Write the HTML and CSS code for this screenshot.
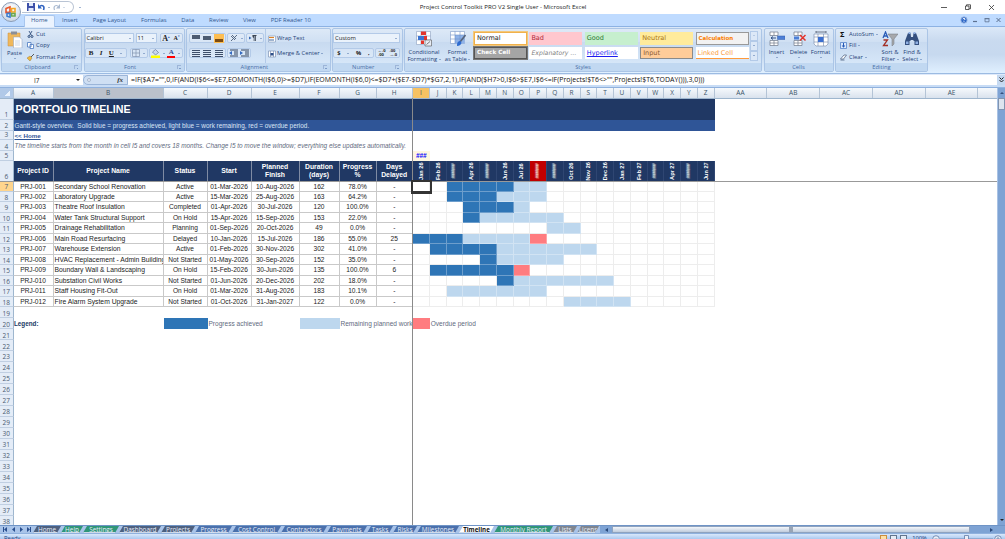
FILE: index.html
```html
<!DOCTYPE html>
<html lang="en">
<head>
    <meta charset="UTF-8">
    <meta name="viewport" content="width=device-width, initial-scale=1.0">
    <title>Project Control Toolkit PRO V2 Single User - Microsoft Excel</title>
    <link rel="stylesheet" href="styles.css">
</head>
<body>
    <!-- Title bar -->
    <header class="titlebar">
        <div class="quick-access">
            <svg width="8" height="8" viewBox="0 0 8 8"><path fill="#3c4fa8" d="M0 0h8v8H0z"/><path fill="#dfe8fa" d="M2 0h4v3H2zM1.500 5h5v3h-5z"/></svg>
            <svg width="7" height="7" viewBox="0 0 7 7"><path d="M1 3c3-3 6-1 4.500 3" fill="none" stroke="#2f62c0" stroke-width="1.600"/><path fill="#2f62c0" d="M0 0v4.500h4z"/></svg>
            <i class="caret"></i>
            <svg width="7" height="7" viewBox="0 0 7 7"><path d="M6 3c-3-3-6-1-4.500 3" fill="none" stroke="#a9b9d0" stroke-width="1.200"/><path fill="#a9b9d0" d="M7 0v4.500H3z"/></svg>
            <i class="caret pale"></i>
        </div>
        <i class="caret qa-more"></i>
        <span class="window-title">Project Control Toolkit PRO V2 Single User - Microsoft Excel</span>
        <svg class="window-buttons" width="54" height="8" viewBox="0 0 54 8" fill="none" stroke="#333" stroke-width=".8"><path d="M0 4.500h6M24.500 3h3.500v3.500h-3.500zM25.500 3V1.800h4v4H28M48 2l5 5M53 2l-5 5"/></svg>
    </header>
    <div class="office-button">
        <svg width="14" height="14" viewBox="0 0 14 14" fill="none" stroke-width="1.600"><path stroke="#e8562a" d="M2 3.500l4-1.500v5l-4 .5z"/><path stroke="#f5a623" d="M7.500 3.500h3.500v3.500H7.500z"/><path stroke="#6aa84f" d="M7.500 8.500H11V11H7.500z"/><path stroke="#3f7fd0" d="M3 8.500l3-.3v4l-3-1z"/></svg>
    </div>

    <!-- Ribbon tabs -->
    <nav class="tabs">
        <span class="tab active">Home</span>
        <span class="tab">Insert</span>
        <span class="tab">Page Layout</span>
        <span class="tab">Formulas</span>
        <span class="tab">Data</span>
        <span class="tab">Review</span>
        <span class="tab">View</span>
        <span class="tab">PDF Reader 10</span>
        <svg class="book-buttons" width="42" height="8" viewBox="0 0 42 8" fill="none" stroke="#5d7190"><circle cx="4" cy="4" r="3.200" fill="#2e68c8" stroke="#a7bfe2" stroke-width=".8"/><path stroke="#fff" stroke-width=".9" d="M2.800 3q1.200-1.500 2.400 0L4 4.300M4 5.200v.8"/><path stroke-width="1.200" d="M13 5.500h4"/><path d="M25 2.800h4v3h-4zM24.500 2.500h5" stroke-width=".8"/><path d="M36.500 2l4 4M40.500 2l-4 4"/></svg>
    </nav>

    <!-- Ribbon -->
    <div class="ribbon">
        <section class="group clipboard">
            <div class="tools">
                <div class="big paste">
                    <svg width="16" height="17" viewBox="0 0 16 17"><path fill="#efb85c" stroke="#c98d3e" stroke-width=".5" d="M1 2h12v13H1z"/><path fill="#8b8f98" d="M4 .5h6v3H4z"/><path fill="#fff" stroke="#8c9ebb" stroke-width=".5" d="M6.500 6h6l2.500 2.500V17H6.500z"/><path stroke="#9bb2d6" stroke-width=".5" d="M8 10h5M8 12h5M8 14h5"/></svg>
                    <span>Paste</span><i class="caret"></i>
                </div>
                <div class="stack">
                    <span class="small"><svg width="7" height="7" viewBox="0 0 7 7" fill="none" stroke="#34527f"><path d="M2 0l2.500 4.500M5 0L2.500 4.500" stroke-width=".9"/><circle cx="2" cy="5.500" r="1"/><circle cx="5" cy="5.500" r="1"/></svg>Cut</span>
                    <span class="small"><svg width="7" height="7" viewBox="0 0 7 7" fill="#fff" stroke="#4a78c0" stroke-width=".8"><path d="M.5.5h3.500v4.500H.5zM3 2.500h3.500v4H3z"/></svg>Copy</span>
                    <span class="small"><svg width="7" height="7" viewBox="0 0 7 7"><path fill="#f0b93f" stroke="#8b6728" stroke-width=".4" d="M0 4l3-2 2 2-2 3z"/><path stroke="#555" d="M4 3L7 0"/></svg>Format Painter</span>
                </div>
            </div>
            <div class="group-name">Clipboard<i class="launcher"></i></div>
        </section>

        <section class="group font">
            <div class="tools column">
                <div class="line">
                    <span class="combo font-name">Calibri<i class="caret"></i></span>
                    <span class="combo font-size">11<i class="caret"></i></span>
                    <span class="buttons grow"><b class="serif big-a">A<sup>▴</sup></b><b class="serif small-a">A<sup>▾</sup></b></span>
                </div>
                <div class="line">
                    <span class="buttons biu"><b class="serif">B</b><b class="serif italic">I</b><b class="serif under">U</b><i class="caret"></i></span>
                    <span class="buttons border-btn"><svg width="8" height="8" viewBox="0 0 8 8" fill="none" stroke="#8194b0" stroke-width=".7"><path d="M.5.5h7v7h-7zM4 0v8M0 4h8"/></svg><i class="caret"></i></span>
                    <span class="buttons colors"><svg width="9" height="9" viewBox="0 0 9 9"><path fill="#c9d8ee" stroke="#50658a" stroke-width=".6" d="M1.500 3l3-2.500 3 3L4.500 6z"/><path fill="#ff0" d="M0 6.500h9V9H0z"/></svg><i class="caret"></i><span class="font-color">A</span><i class="caret"></i></span>
                </div>
            </div>
            <div class="group-name">Font<i class="launcher"></i></div>
        </section>

        <section class="group alignment">
            <div class="tools">
                <div class="column align-left">
                    <div class="line">
                        <span class="buttons three"><i class="bars top"></i><i class="bars mid"></i><i class="bars bottom on"></i></span>
                        <span class="buttons pair"><svg width="8" height="8" viewBox="0 0 8 8" fill="none" stroke="#4b5d78"><path d="M1 7l6-6M1 2l4 4M2 1l4 4" stroke-width=".9"/></svg><i class="caret"></i></span>
                        <span class="buttons pair"><svg width="8" height="8" viewBox="0 0 8 8"><path fill="#3768b3" d="M0 2.500L2.500 4 0 5.500z"/><path fill="#3b4554" d="M3.500 1h4v1h-.6v5h-.8V2h-.6v5h-.8V4Q3 3.500 3.500 1z"/></svg><i class="caret"></i></span>
                    </div>
                    <div class="line">
                        <span class="buttons three"><i class="lines"></i><i class="lines center"></i><i class="lines right"></i></span>
                        <span class="buttons pair indent"><svg width="9" height="8" viewBox="0 0 9 8"><path d="M1 1h8M5 3h4M5 5h4M1 7h8" stroke="#33445f"/><path fill="#356bc0" d="M0 4l3-2v4z"/></svg><svg width="9" height="8" viewBox="0 0 9 8"><path d="M1 1h8M5 3h4M5 5h4M1 7h8" stroke="#33445f"/><path fill="#356bc0" d="M3 4L0 2v4z"/></svg></span>
                    </div>
                </div>
                <div class="column wrap-merge">
                    <span class="small"><svg width="8" height="8" viewBox="0 0 8 8"><path fill="#fff" stroke="#7b93b8" stroke-width=".6" d="M.5 1h7v6h-7z"/><path stroke="#d9822b" stroke-width="1.200" d="M1 2.500h5"/><path stroke="#41689f" d="M1 5h5"/></svg>Wrap Text</span>
                    <span class="small"><svg width="8" height="8" viewBox="0 0 8 8"><path fill="#fff" stroke="#6d85ab" stroke-width=".6" d="M.5 1h7v6h-7zM2.500 1v6M5.500 1v6"/><path fill="#2e4f88" d="M2.500 3h3v2.500h-3z"/></svg>Merge &amp; Center <i class="caret"></i></span>
                </div>
            </div>
            <div class="group-name">Alignment<i class="launcher"></i></div>
        </section>

        <section class="group number">
            <div class="tools column">
                <div class="line"><span class="combo format">Custom<i class="caret"></i></span></div>
                <div class="line">
                    <span class="buttons money"><b>$</b><i class="caret"></i><b>%</b><b>,</b></span>
                    <span class="buttons decimals"><span>←.0<br>.00</span><span>.00<br>→.0</span></span>
                </div>
            </div>
            <div class="group-name">Number<i class="launcher"></i></div>
        </section>

        <section class="group styles">
            <div class="tools">
                <div class="big cond">
                    <svg width="16" height="16" viewBox="0 0 16 16"><path fill="#fff" stroke="#8ba0c0" stroke-width=".6" d="M.5.5h14v13H.5zM5 .5v13M10 .5v13M.5 5h14M.5 9h14"/><path fill="#e3342b" d="M5 .5h5V4H5zM5 9.500h3v3.500H5z"/><path fill="#3b74d2" d="M2 5h6v4H2z"/><path fill="#e3342b" d="M8 5h3v4H8z"/><path fill="#e8edf5" stroke="#555" stroke-width=".6" d="M9 9h6.500v6H9z"/><path stroke="#444" d="M10.500 13.500l3.500-3" stroke-width=".7"/></svg>
                    <span>Conditional</span><span>Formatting <i class="caret"></i></span>
                </div>
                <div class="big table">
                    <svg width="16" height="16" viewBox="0 0 16 16"><path fill="#fff" stroke="#7f9bc8" stroke-width=".6" d="M.5.5h14v12H.5z"/><path fill="#8fb2e8" d="M5 4h9.500v8.500H5z"/><path d="M5 .5v12M10 .5v12M.5 4h14M.5 8h14" stroke="#6e90c8" stroke-width=".6"/><path stroke="#55637a" stroke-width="1.600" d="M15.500 4L10 11"/><path fill="#2e6bd0" d="M7 14q0-4 3.500-4l1 2q-1 3-4.500 3z"/></svg>
                    <span>Format</span><span>as Table <i class="caret"></i></span>
                </div>
                <div class="gallery">
                    <span class="swatch normal">Normal</span>
                    <span class="swatch bad">Bad</span>
                    <span class="swatch good">Good</span>
                    <span class="swatch neutral">Neutral</span>
                    <span class="swatch calculation">Calculation</span>
                    <span class="swatch check">Check Cell</span>
                    <span class="swatch explanatory">Explanatory ...</span>
                    <span class="swatch hyperlink">Hyperlink</span>
                    <span class="swatch input">Input</span>
                    <span class="swatch linked">Linked Cell</span>
                </div>
                <div class="gallery-scroll"><i><b class="caret up pale"></b></i><i><b class="caret"></b></i><i><b class="caret"></b></i></div>
            </div>
            <div class="group-name">Styles</div>
        </section>

        <section class="group cells">
            <div class="tools">
                <div class="big">
                    <svg width="16" height="16" viewBox="0 0 16 16"><path fill="#fff" stroke="#70798a" stroke-width=".7" d="M1 1h8v3.500H1zM5 1v3.500M1 9.500h8v5H1zM5 9.500v5M1 12h8"/><path fill="#4d7fd6" stroke="#335da8" stroke-width=".5" d="M8.500 5H16v3.500H8.500z"/><path stroke="#2b4b80" d="M2 7h5M2 7l2-1.500M2 7l2 1.500" stroke-width=".9"/></svg>
                    <span>Insert</span><i class="caret"></i>
                </div>
                <div class="big">
                    <svg width="16" height="16" viewBox="0 0 16 16"><path fill="#fff" stroke="#70798a" stroke-width=".7" d="M3 1h8v3.500H3zM7 1v3.500M3 9.500h8v5H3zM7 9.500v5M3 12h8"/><path fill="#4d7fd6" d="M3 5.500h5v3H3z"/><path stroke="#e3342b" stroke-width="1.500" d="M9 4l5.500 5.500M14.500 4L9 9.500"/></svg>
                    <span>Delete</span><i class="caret"></i>
                </div>
                <div class="big">
                    <svg width="16" height="16" viewBox="0 0 16 16"><path fill="#fff" stroke="#7388a8" stroke-width=".6" d="M1 3h14v10L13 15H3l-2-2zM5 3v12M10.500 3v12M1 6h14M1 11h14"/><path fill="#3b6fd0" d="M5 6h5.500v5H5z"/><path stroke="#505c70" d="M3 1h10M3 0v2M13 0v2" stroke-width=".8"/></svg>
                    <span>Format</span><i class="caret"></i>
                </div>
            </div>
            <div class="group-name">Cells</div>
        </section>

        <section class="group editing">
            <div class="tools">
                <div class="stack">
                    <span class="small"><b class="sigma">Σ</b>AutoSum <i class="caret"></i></span>
                    <span class="small"><svg width="7" height="7" viewBox="0 0 7 7"><path fill="#dbe8fb" stroke="#4778c6" stroke-width=".7" d="M.5.5h6v6h-6z"/><path fill="#2459b5" d="M3 1h1v2.500h1.300L3.500 5.700 1.700 3.500H3z"/></svg>Fill <i class="caret"></i></span>
                    <span class="small"><svg width="7" height="7" viewBox="0 0 7 7"><path fill="#fff" stroke="#4b5f80" stroke-width=".7" d="M.5 5L4 1h2.500L3.500 5z"/><path stroke="#4b5f80" d="M.5 6h4" stroke-width=".8"/></svg>Clear <i class="caret"></i></span>
                </div>
                <div class="big sort">
                    <svg width="16" height="16" viewBox="0 0 16 16"><path fill="#a7a9ad" stroke="#70747c" stroke-width=".5" d="M6 3h10l-4 5v5l-2 2V8z"/><path fill="none" stroke="#2a5cb8" stroke-width="1.300" d="M1 7l2.500-6L6 7M2 5h3"/><path fill="none" stroke="#a23128" stroke-width="1.300" d="M1.500 9h4l-4 5.500h4.500"/></svg>
                    <span>Sort &amp;</span><span>Filter <i class="caret"></i></span>
                </div>
                <div class="big find">
                    <svg width="16" height="16" viewBox="0 0 16 16"><path fill="#35507f" d="M4 2h2.500L7 6h2l.5-4H12l3 8v4h-4.500v-4h-1V9h-3v1h-1v4H1v-4z"/><path fill="#8fb0e4" d="M2 10.500h2.500v2.500H2zM11.500 10.500H14v2.500h-2.500zM4.500 1h2v2h-2zM9.500 1h2v2h-2z"/></svg>
                    <span>Find &amp;</span><span>Select <i class="caret"></i></span>
                </div>
            </div>
            <div class="group-name">Editing</div>
        </section>
    </div>

    <!-- Formula bar -->
    <div class="formula-bar">
        <div class="name-box"><span>I7</span><i class="caret dark"></i></div>
        <div class="fx"><i class="knob"></i><span>fx</span></div>
        <div class="formula"><span>=IF($A7="",0,IF(AND(I$6&lt;=$E7,EOMONTH(I$6,0)&gt;=$D7),IF(EOMONTH(I$6,0)&lt;=$D7+($E7-$D7)*$G7,2,1),IF(AND($H7&gt;0,I$6&gt;$E7,I$6&lt;=IF(Projects!$T6&lt;&gt;"",Projects!$T6,TODAY())),3,0)))</span></div>
        <div class="expand"><svg width="5" height="6" viewBox="0 0 5 6" fill="none" stroke="#222"><path d="M.5.5l2 2 2-2M.5 3l2 2 2-2"/></svg></div>
    </div>

    <!-- Worksheet -->
    <div class="work-area">
        <div class="sheet">
            <div class="col-heads" id="colHeads"></div>
            <div class="row r1"><span class="rh">1</span><div class="banner title">PORTFOLIO TIMELINE</div></div>
            <div class="row r2"><span class="rh">2</span><div class="banner sub"><span>Gantt-style overview.&nbsp; Solid blue = progress achieved, light blue = work remaining, red = overdue period.</span></div></div>
            <div class="row r3"><span class="rh">3</span><span class="home-link">&lt;&lt; Home</span></div>
            <div class="row r4"><span class="rh">4</span><span class="note">The timeline starts from the month in cell I5 and covers 18 months. Change I5 to move the window; everything else updates automatically.</span></div>
            <div class="row r5"><span class="rh">5</span><span class="start-month">###</span></div>
            <div class="row r6" id="tableHead"><span class="rh">6</span></div>
            <div id="projects"></div>
            <div class="row"><span class="rh">19</span></div>
            <div class="row legend">
                <span class="rh">20</span>
                <b class="c-ab">Legend:</b>
                <i class="c-c done"></i><span class="c-de">Progress achieved</span>
                <i class="c-f left"></i><span class="c-gh">Remaining planned work</span>
                <i class="m late"></i><span>Overdue period</span>
            </div>
            <div id="emptyRows"></div>
            <i class="freeze-v"></i>
            <i class="freeze-h"></i>
            <i class="cursor"></i>
        </div>
        <div class="vscroll"><i class="arrow"><b class="caret up dark"></b></i><i class="thumb"></i><i class="arrow end"><b class="caret dark"></b></i></div>
    </div>

    <!-- Sheet tabs and status bar -->
    <div class="sheet-tabs">
        <div class="tab-nav"><svg width="28" height="5" viewBox="0 0 28 5" fill="#2a4f8f"><path d="M0 0h1v5H0zM4 0v5L1 2.500zM12 0v5L9 2.500zM17 0v5l3-2.500zM24 0v5l3-2.500zM27 0h1v5h-1z"/></svg></div>
        <div class="sheet-list" id="sheetList"></div>
        <div class="hscroll"><i class="arrow-left"></i><i class="hthumb"></i><i class="arrow-right"></i></div>
    </div>
    <footer class="status">
        <span class="ready">Ready</span>
        <span class="view-buttons"><i class="on"></i><i></i><i></i></span>
        <span class="zoom">100%</span>
        <svg width="73" height="8" viewBox="0 0 73 8" fill="#e8eef8" stroke="#5f7ba6" stroke-width=".8"><circle cx="4" cy="4" r="3.300"/><path d="M2.500 4h3M8 4h53"/><path d="M32.500.5h4V8h-4z"/><circle cx="66" cy="4" r="3.300"/><path d="M64 4h4M66 2v4"/></svg>
    </footer>
    <script src="script.js"></script>
</body>
</html>
```
FILE: styles.css
```css
* {
    box-sizing: border-box;
}
:root {
    --a: 40px;
    --b: 110px;
    --c: 44px;
    --d: 44px;
    --e: 48px;
    --f: 40px;
    --g: 37px;
    --h: 36.5px;
    --m: 16.76px;
    --rh: 13.5px;
    --navy: #203864;
}
body {
    margin: 0;
    width: 1005px;
    height: 539px;
    overflow: hidden;
    position: relative;
    background: #fff;
    font-family: "Open Sans", "Noto Sans", sans-serif;
    font-size: 5.8px;
    line-height: 7px;
    color: #1f3f77;
    white-space: nowrap;
}
i {
    font-style: normal;
}
svg {
    display: block;
    flex: none;
}
.caret {
    display: inline-block;
    flex: none;
    width: 0;
    height: 0;
    border: 1.3px solid transparent;
    border-top: 1.8px solid #4a6fa8;
    border-bottom: 0;
    vertical-align: 1px;
}
.caret.up {
    border-top: 0;
    border-bottom: 1.8px solid #4a6fa8;
}
.caret.pale {
    opacity: .5;
}
.caret.dark {
    border-width: 2px;
    border-top: 2.5px solid #222;
    border-bottom: 0;
}
.caret.up.dark {
    border-top: 0;
    border-bottom: 2.5px solid #33507e;
}

/* Title bar */
.titlebar {
    height: 14px;
    display: flex;
    align-items: center;
    background: #fff;
}
.quick-access {
    width: 52px;
    height: 12px;
    margin-left: 22px;
    padding: 0 5px;
    display: flex;
    align-items: center;
    gap: 3px;
    border: 1px solid #b9c4d4;
    border-left: 0;
    border-radius: 0 7px 7px 0;
}
.qa-more {
    margin-left: 5px;
}
.window-title {
    width: 170px;
    margin-left: 337px;
    font-size: 6.080px;
    color: #222;
    text-align: center;
}
.window-buttons {
    margin-left: auto;
    margin-right: 10px;
}
.office-button {
    position: absolute;
    left: 1px;
    top: 2px;
    width: 20px;
    height: 20px;
    display: flex;
    align-items: center;
    justify-content: center;
    border: 1px solid #8a9bb5;
    border-radius: 50%;
    background: radial-gradient(circle at 50% 30%, #fff, #c2cede);
}

/* Ribbon tabs */
.tabs {
    height: 12px;
    padding: 1px 3px 0 24px;
    display: flex;
    background: #bfdbff;
    color: #31578f;
    font-size: 5.9px;
}
.tab {
    padding: 2px 7.4px 0;
    height: 12px;
}
.tab.active {
    border: 1px solid #a8c6ee;
    border-bottom: 0;
    border-radius: 2px 2px 0 0;
    background: #ebf3fe;
    padding: 1px 6px 0;
}
.book-buttons {
    margin: 1px 0 0 auto;
}

/* Ribbon */
.ribbon {
    height: 48px;
    padding: 1px 1px 1px;
    display: flex;
    gap: 1.5px;
    border-top: 1px solid #8db2e3;
    border-bottom: 1px solid #9cbbe2;
    background: linear-gradient(#dbe8f8, #c9daef 30%, #c7d9ef 60%, #e0f0ff);
}
.group {
    display: flex;
    flex-direction: column;
    border: 1px solid #abc5e6;
    border-radius: 2px;
    background: linear-gradient(#dde9f7, #d0e0f3 30%, #c8daf0 32%, #dbebfb);
}
.clipboard { width: 81px; }
.font { width: 101px; }
.alignment { width: 144.5px; }
.number { width: 70.5px; }
.styles { width: 358px; }
.cells { width: 70px; }
.editing { width: 93px; }
.tools {
    flex: 1;
    display: flex;
}
.column {
    display: flex;
    flex-direction: column;
}
.group-name {
    position: relative;
    height: 8px;
    background: #c1d8f1;
    color: #4a6fa8;
    line-height: 8px;
    text-align: center;
    padding-right: 8px;
}
.styles .group-name,
.cells .group-name,
.editing .group-name {
    padding: 0;
}
.launcher {
    position: absolute;
    right: 3px;
    top: 2px;
    width: 4px;
    height: 4px;
    border-left: 1px solid #9db5d8;
    border-top: 1px solid #9db5d8;
}
.launcher::after {
    content: "";
    position: absolute;
    right: 0;
    bottom: 0;
    width: 1.500px;
    height: 1.500px;
    background: #7e9cc8;
}
.big {
    width: 22px;
    padding-top: 2px;
    display: flex;
    flex-direction: column;
    align-items: center;
}
.big svg {
    margin-bottom: 2px;
}
.big .caret {
    margin-top: 1px;
}
.paste {
    width: 25px;
}
.stack {
    display: flex;
    flex-direction: column;
    gap: 4.5px;
    padding-top: 1.500px;
}
.small {
    display: flex;
    align-items: center;
    gap: 2px;
    height: 7px;
}
.line {
    display: flex;
    height: 10px;
    margin-top: 4px;
}
.line + .line {
    margin-top: 5px;
}
.combo {
    display: flex;
    align-items: center;
    justify-content: space-between;
    padding: 0 2px 0 1px;
    background: #eaf2fb;
    border: 1px solid #b3cae8;
    color: #222;
}
.font-name { width: 49px; }
.font-size { width: 21px; margin-left: 2px; }
.format { width: 67px; }
.buttons {
    display: flex;
    align-items: center;
    justify-content: space-around;
    border: 1px solid #b3cae8;
    border-radius: 2px;
    background: rgba(255, 255, 255, .2);
    color: #222;
}
.serif {
    font-family: "Liberation Serif", serif;
    font-size: 7px;
}
.serif sup {
    font-size: 3px;
    vertical-align: 3px;
    line-height: 0;
    color: #2f62b8;
}
.big-a { font-size: 8px; }
.small-a { font-size: 6px; }
.italic { font-style: italic; }
.under { text-decoration: underline; }
.grow { width: 23px; margin-left: 3px; }
.biu { width: 42px; }
.border-btn { width: 18px; margin-left: 3px; }
.colors { width: 34px; margin-left: 1px; }
.font-color {
    width: 8px;
    height: 9px;
    border-bottom: 2.5px solid red;
    color: #2d4f94;
    font: bold 7px/7px "Liberation Serif", serif;
    text-align: center;
}
.align-left {
    width: 78px;
    padding-left: 2px;
}
.three { width: 37px; }
.pair { width: 18px; margin-left: 1px; }
.pair.indent { width: 24px; }
.bars,
.lines {
    width: 10px;
    height: 9px;
    background: linear-gradient(#4d5c72, #4d5c72) center / 8px 4px no-repeat;
}
.bars.top { background-position: center 1px; }
.bars.bottom {
    background: linear-gradient(#7b4b12, #7b4b12) center 5px / 8px 3px no-repeat, #fdbe52;
}
.lines {
    background: repeating-linear-gradient(#3d4e69 0 1px, transparent 1px 2px) center 1px / 8px 7px no-repeat;
}
.wrap-merge {
    padding-top: 6px;
    gap: 8px;
    border-left: 1px solid #b3cae8;
    padding-left: 2px;
}
.wrap-merge .small {
    gap: 1px;
}
.money { width: 41px; }
.decimals {
    width: 25px;
    margin-left: 1px;
    font-size: 4px;
    font-weight: bold;
    line-height: 4px;
}
.cond { width: 38px; }
.table { width: 29px; }
.cond .caret, .table .caret, .sort .caret, .find .caret {
    margin: 0;
}
.gallery {
    width: 277px;
    height: 31px;
    margin-top: 1.500px;
    margin-left: 1px;
    display: grid;
    grid-template-columns: repeat(5, 53px);
    grid-template-rows: 13px 12px;
    gap: 2.4px;
    padding: 1px;
    font-family: "DejaVu Sans", sans-serif;
    font-size: 6.5px;
}
.swatch {
    padding-left: 2px;
    line-height: 12px;
    background: #fff;
}
.normal { color: #222; border: 1px solid #f0b14c; outline: 1px solid #f3c87c; line-height: 11px; }
.bad { background: #ffc7ce; color: #b02a3c; }
.good { background: #c6efce; color: #2d7a37; }
.neutral { background: #ffeb9c; color: #a97312; }
.calculation { background: #f2f2f2; color: #fa7d00; border: 1px solid #999; font-weight: bold; font-size: 5.5px; line-height: 11px; }
.check { background: #a5a5a5; color: #fff; border: 1px solid #555; outline: 1px solid #777; font-weight: bold; font-size: 5.7px; line-height: 9px; }
.explanatory { color: #7f7f7f; font-style: italic; font-size: 6.2px; }
.hyperlink { color: #1b1bf0; text-decoration: underline; }
.input { background: #ffcc99; color: #8a5a33; border: 1px solid #8a8a8a; line-height: 10px; }
.linked { color: #fa9a40; border-bottom: 1.5px solid #ff9a3c; }
.gallery-scroll {
    width: 8px;
    margin-top: 1.500px;
    display: flex;
    flex-direction: column;
}
.gallery-scroll i {
    width: 8px;
    height: 10px;
    display: flex;
    align-items: center;
    justify-content: center;
    border: 1px solid #b3cae8;
    background: #dce8f7;
}
.cells .tools {
    justify-content: center;
}
.editing .stack {
    width: 43px;
    padding-left: 4px;
}
.sigma {
    width: 7px;
    font-size: 7.5px;
    color: #111;
}

/* Formula bar */
.formula-bar {
    height: 14px;
    padding-bottom: 2px;
    display: flex;
    border-top: 1px solid #dfeafa;
    border-bottom: 1px solid #8fb1de;
    background: #c8dcf5;
}
.name-box {
    width: 83px;
    padding-left: 34px;
    display: flex;
    align-items: center;
    background: #fff;
    color: #222;
    font-size: 6.5px;
}
.name-box .caret {
    margin-left: auto;
    margin-right: 3px;
}
.fx {
    width: 45px;
    display: flex;
    align-items: center;
    justify-content: space-between;
    padding: 0 4px 0 3px;
    border: 1px solid #9bb5d8;
    border-radius: 6px 0 0 6px;
    background: #cfdff3;
    font: italic bold 7px "Liberation Serif", serif;
    color: #333;
}
.knob {
    width: 4px;
    height: 4px;
    border-radius: 50%;
    border: 1px solid #a8b8ce;
    background: #e8effa;
}
.formula {
    flex: 1;
    padding-left: 3px;
    background: #fff;
    color: #111;
    font-size: 6.970px;
    line-height: 10.500px;
}
.expand {
    width: 8px;
    display: flex;
    align-items: center;
    justify-content: center;
    background: #c5d9f1;
}

/* Worksheet */
.work-area {
    height: 437px;
    display: flex;
}
.sheet {
    position: relative;
    width: 997px;
    overflow: hidden;
    background: #fff;
    font-family: "Liberation Sans", Arial, sans-serif;
    font-size: 6.4px;
}
.col-heads {
    height: 10.500px;
    display: flex;
    background: linear-gradient(#f6f9fc, #d9e2ed);
    border-bottom: 1px solid #9eb6ce;
    font-family: "Open Sans", sans-serif;
    font-size: 6.5px;
    color: #3b5468;
}
.col-heads span {
    flex: none;
    border-right: 1px solid #b4c4d6;
    text-align: center;
    line-height: 10px;
}
.col-heads .corner {
    width: var(--rh);
    background: linear-gradient(135deg, transparent 60%, #eaf2fc 60%) center / 7px 7px no-repeat, #b1c9e8;
}
.col-heads .hover { background: #bbc1cb; }
.col-heads .current { background: #f7c263; }
.col-heads .wide { width: 52.8px; }
.row {
    height: 10.970px;
    display: flex;
}
.rh {
    flex: none;
    width: var(--rh);
    padding-bottom: .5px;
    border-right: 1px solid #9eb6ce;
    border-bottom: 1px solid #c0cfe2;
    background: #e4ecf7;
    display: flex;
    align-items: flex-end;
    justify-content: center;
    font-family: "Open Sans", sans-serif;
    font-size: 6.5px;
    line-height: 7px;
    color: #4a5a70;
}
.rh.current {
    background: #ffd58d;
}
.r1 { height: 21px; }
.r2 { height: 11px; }
.r3 { height: 9px; }
.r4 { height: 11.500px; }
.r5 { height: 9.500px; }
.r6 { height: 21px; }
.banner {
    width: 701px;
    padding-left: 2px;
    background: var(--navy);
    color: #fff;
}
.title {
    font-size: 10.700px;
    font-weight: bold;
    line-height: 20px;
}
.sub {
    padding-left: 1px;
    background: #2f5597;
    color: #dbe6f5;
    line-height: 11px;
}
.home-link {
    padding-left: 1px;
    color: #2f5597;
    font-size: 6.2px;
    font-weight: bold;
    text-decoration: underline;
    line-height: 9px;
}
.note {
    padding-left: 1px;
    color: #5f6b80;
    font-size: 6.430px;
    font-style: italic;
    line-height: 12px;
}
.start-month {
    width: var(--m);
    margin-left: 399.5px;
    background: #fff7e0;
    color: #0000ff;
    font-weight: bold;
    font-style: italic;
    font-size: 6.3px;
    line-height: 10px;
    text-align: center;
}
.c-a { width: var(--a); }
.c-b { width: var(--b); }
.c-c { width: var(--c); }
.c-d { width: var(--d); }
.c-e { width: var(--e); }
.c-f { width: var(--f); }
.c-g { width: var(--g); }
.c-h { width: var(--h); }
.m { width: var(--m); }
.c-ab { width: calc(var(--a) + var(--b)); }
.c-de { width: calc(var(--d) + var(--e)); }
.c-gh { width: calc(var(--g) + var(--h)); }
.th {
    flex: none;
    display: flex;
    align-items: center;
    justify-content: center;
    background: var(--navy);
    border-right: 1px solid #7f8ba3;
    color: #fff;
    font-weight: bold;
    font-size: 6.8px;
    line-height: 8.400px;
    text-align: center;
    white-space: pre;
}
.th.m {
    border-right: 1px solid #2f4672;
    font-size: 5.6px;
}
.th.m span {
    transform: rotate(-90deg);
}
.th.m .hash {
    font-size: 4.5px;
    font-weight: normal;
    letter-spacing: -.7px;
}
.th.today {
    background: #c00000;
}
.project {
    height: 10.470px;
}
.td {
    flex: none;
    overflow: hidden;
    border-right: 1px solid #c9c9c9;
    border-bottom: 1px solid #c9c9c9;
    color: #222;
    font-size: 6.6px;
    line-height: 10px;
    text-align: center;
}
.td.c-b {
    padding-left: 1px;
    font-size: 6.770px;
    text-align: left;
}
.bar {
    flex: none;
    border-right: 1px solid #ededed;
    border-bottom: 1px solid #ededed;
}
.bar.done, .bar.left, .bar.late {
    border-color: rgba(255, 255, 255, .3);
}
.done { background: #2e75b6; }
.left { background: #bdd7ee; }
.late { background: #ff7c80; }
.legend {
    color: #5f6b80;
    font-size: 6.550px;
    line-height: 11px;
}
.legend b {
    color: var(--navy);
    padding-left: .5px;
    font-size: 6.3px;
}
.legend > * {
    flex: none;
}
.legend > span:not(.rh) {
    overflow: hidden;
    padding-left: 1px;
}

/* Frozen pane lines and active cell lie over the grid */
.freeze-v {
    position: absolute;
    left: 412px;
    top: 10px;
    width: 1px;
    height: 427px;
    background: #8a8a8a;
}
.freeze-h {
    position: absolute;
    left: 0;
    top: 93px;
    width: 997px;
    height: 1px;
    background: #999;
}
.cursor {
    position: absolute;
    left: 412px;
    top: 93px;
    width: 18.500px;
    height: 12px;
    border: 2px solid #333;
    border-width: 1px 1px 2px 1px;
    outline: .5px solid #333;
}
.vscroll {
    width: 8px;
    display: flex;
    flex-direction: column;
    background: #7ea3d4;
    border-left: 1px solid #a9c2e4;
}
.arrow {
    height: 10px;
    display: flex;
    align-items: center;
    justify-content: center;
}
.arrow.end {
    margin-top: auto;
}
.thumb {
    height: 12px;
    border: 1px solid #8194b0;
    background: #dde5ef;
}

/* Sheet tabs */
.sheet-tabs {
    height: 8px;
    display: flex;
    border-top: 1px solid #6f94c6;
    background: #a9c4e9;
}
.tab-nav {
    width: 33px;
    padding: 1px 0 0 3px;
}
.sheet-list {
    width: 567px;
    display: flex;
    overflow: hidden;
}
.sheet-tab {
    flex: none;
    height: 7px;
    border-bottom: 1px solid #cfdaea;
    clip-path: polygon(4px 0, 100% 0, calc(100% - 4px) 100%, 0 100%);
    color: #e8eef8;
    font-size: 6.4px;
    line-height: 7.500px;
    text-align: center;
}
.sheet-tab.navy { background: #4d607f; }
.sheet-tab.green { background: #2f9678; }
.sheet-tab.blue { background: #4a70ac; }
.sheet-tab.gray { background: #7f858f; }
.sheet-tab.active {
    background: #fff;
    color: #111;
    font-size: 6.2px;
    font-weight: bold;
}
.hscroll {
    flex: 1;
    display: flex;
    align-items: center;
    background: #7ea3d4;
}
.arrow-left {
    width: 12px;
    height: 0;
}
.arrow-left::before,
.arrow-right::before {
    content: "";
    display: block;
    width: 0;
    margin-left: 5px;
    margin-top: -2px;
    border: 2px solid transparent;
    border-right: 3px solid #2a4a7c;
    border-left: 0;
}
.arrow-right {
    margin-left: 15px;
    height: 0;
}
.arrow-right::before {
    border-right: 0;
    border-left: 3px solid #2a4a7c;
}
.hthumb {
    width: 358px;
    height: 7px;
    border: 1px solid #8fa3bf;
    background: linear-gradient(90deg, transparent 176px, #98a4b5 176px 180px, transparent 180px), linear-gradient(#f4f7fb, #bfcbdc);
}

/* Status bar */
.status {
    height: 6px;
    overflow: hidden;
    display: flex;
    padding-top: 1px;
    border-top: 1px solid #8fb1de;
    background: linear-gradient(#d9e8fb, #abc9f0);
    color: #1e3f7c;
}
.ready {
    padding-left: 4px;
    line-height: 7px;
}
.view-buttons {
    margin-left: auto;
    display: flex;
    gap: 3px;
}
.view-buttons i {
    width: 7px;
    height: 6px;
    border: 1px solid #63758f;
    background: #e6ecf5;
}
.view-buttons i.on {
    border-color: #c98d3e;
    background: #fde0a5;
}
.zoom {
    width: 25px;
    text-align: center;
    line-height: 7px;
}
```
FILE: script.js
```js
const colLetters = ["A", "B", "C", "D", "E", "F", "G", "H"];
const monthLetters = "IJKLMNOPQRSTUVWXYZ".split("");
const months = ["Jan 26", "Feb 26", "", "Apr 26", "", "Jun 26", "Jul 26", "", "", "Oct 26", "Nov 26", "Dec 26", "Jan 27", "Feb 27", "", "Apr 27", "", "Jun 27"];
const heads = ["Project ID", "Project Name", "Status", "Start", "Planned\nFinish", "Duration\n(days)", "Progress\n%", "Days\nDelayed"];

// last value: one letter per month, d = done, l = remaining, x = overdue
const projects = [
    ["PRJ-001", "Secondary School Renovation", "Active", "01-Mar-2026", "10-Aug-2026", "162", "78.0%", "-", "..ddddll"],
    ["PRJ-002", "Laboratory Upgrade", "Active", "15-Mar-2026", "25-Aug-2026", "163", "64.2%", "-", "..dddlll"],
    ["PRJ-003", "Theatre Roof Insulation", "Completed", "01-Apr-2026", "30-Jul-2026", "120", "100.0%", "-", "...dddl"],
    ["PRJ-004", "Water Tank Structural Support", "On Hold", "15-Apr-2026", "15-Sep-2026", "153", "22.0%", "-", "...dlllll"],
    ["PRJ-005", "Drainage Rehabilitation", "Planning", "01-Sep-2026", "20-Oct-2026", "49", "0.0%", "-", "........ll"],
    ["PRJ-006", "Main Road Resurfacing", "Delayed", "10-Jan-2026", "15-Jul-2026", "186", "55.0%", "25", "dddllllx"],
    ["PRJ-007", "Warehouse Extension", "Active", "01-Feb-2026", "30-Nov-2026", "302", "41.0%", "-", ".ddddllllll"],
    ["PRJ-008", "HVAC Replacement - Admin Building", "Not Started", "01-May-2026", "30-Sep-2026", "152", "35.0%", "-", "....dllll"],
    ["PRJ-009", "Boundary Wall & Landscaping", "On Hold", "15-Feb-2026", "30-Jun-2026", "135", "100.0%", "6", ".dddddx"],
    ["PRJ-010", "Substation Civil Works", "Not Started", "01-Jun-2026", "20-Dec-2026", "202", "18.0%", "-", ".....dllllll"],
    ["PRJ-011", "Staff Housing Fit-Out", "On Hold", "01-Mar-2026", "31-Aug-2026", "183", "10.1%", "-", "..llllll"],
    ["PRJ-012", "Fire Alarm System Upgrade", "Not Started", "01-Oct-2026", "31-Jan-2027", "122", "0.0%", "-", ".........llll"]
];

const sheets = [
    ["Home", "navy", 28], ["Help", "green", 22], ["Settings", "green", 36], ["Dashboard", "navy", 42],
    ["Projects", "navy", 34], ["Progress", "blue", 37], ["Cost Control", "blue", 49], ["Contractors", "blue", 46],
    ["Payments", "blue", 40], ["Tasks", "blue", 26], ["Risks", "blue", 24], ["Milestones", "blue", 42],
    ["Timeline", "active", 35], ["Monthly Report", "green", 59], ["Lists", "gray", 24], ["Licens", "gray", 22]
];

function add(parent, className, text) {
    const el = document.createElement("span");
    el.className = className;
    el.textContent = text || "";
    parent.appendChild(el);
    return el;
}

// Column letters
const colHeads = document.getElementById("colHeads");
add(colHeads, "corner");
colLetters.forEach(l => add(colHeads, "c-" + l.toLowerCase() + (l === "B" ? " hover" : ""), l));
monthLetters.forEach(l => add(colHeads, "m" + (l === "I" ? " current" : ""), l));
["AA", "AB", "AC", "AD", "AE"].forEach(l => add(colHeads, "wide", l));

// Table header
const tableHead = document.getElementById("tableHead");
heads.forEach((h, i) => add(tableHead, "th c-" + colLetters[i].toLowerCase(), h));
months.forEach((label, i) => {
    const th = add(tableHead, "th m" + (i === 7 ? " today" : ""));
    add(th, label ? "" : "hash", label || "########");
});

// Project rows with their bars
const barClass = { d: " done", l: " left", x: " late" };
projects.forEach((p, n) => {
    const row = document.createElement("div");
    row.className = "row project";
    add(row, "rh" + (n === 0 ? " current" : ""), String(n + 7));
    for (let i = 0; i < 8; i++) {
        add(row, "td c-" + colLetters[i].toLowerCase(), p[i]);
    }
    for (let i = 0; i < 18; i++) {
        add(row, "bar m" + (barClass[p[8][i]] || ""));
    }
    document.getElementById("projects").appendChild(row);
});

for (let n = 21; n <= 38; n++) {
    const row = document.createElement("div");
    row.className = "row";
    add(row, "rh", String(n));
    document.getElementById("emptyRows").appendChild(row);
}

sheets.forEach(s => {
    const tab = add(document.getElementById("sheetList"), "sheet-tab " + s[1], s[0]);
    tab.style.width = s[2] + "px";
});
```
